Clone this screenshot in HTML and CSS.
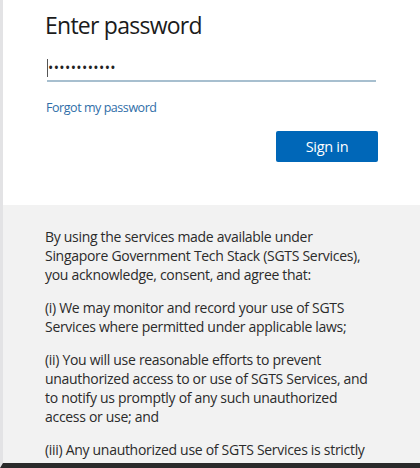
FILE: index.html
```html
<!DOCTYPE html>
<html>
<head>
<meta charset="utf-8">
<link rel="stylesheet" href="styles.css">
</head>
<body>
<div class="frame">
  <section class="login">
    <h1 class="title">Enter password</h1>
    <div class="field">
      <span class="caret"></span><span class="dots">••••••••••••</span>
    </div>
    <a class="forgot" href="#">Forgot my password</a>
    <div class="actions">
      <button class="signin">Sign in</button>
    </div>
  </section>
  <section class="terms">
    <p>By using the services made available under Singapore Government Tech Stack (SGTS Services), you acknowledge, consent, and agree that:</p>
    <p>(i) We may monitor and record your use of SGTS Services where permitted under applicable laws;</p>
    <p>(ii) You will use reasonable efforts to prevent unauthorized access to or use of SGTS Services, and to notify us promptly of any such unauthorized access or use; and</p>
    <p>(iii) Any unauthorized use of SGTS Services is strictly prohibited and may result in disciplinary action.</p>
  </section>
</div>
</body>
</html>
```
FILE: styles.css
```css
html, body {
  margin: 0;
  padding: 0;
  background: #ffffff;
}
body {
  font-family: "Open Sans", "Noto Sans", sans-serif;
  color: #1b1b1b;
}
.frame {
  height: 463px;
  overflow: hidden;
  border-left: 3px solid #e3e3e5;
  border-bottom: 5px solid #2a2a2a;
  display: flex;
  flex-direction: column;
}
.login {
  flex-shrink: 0;
  background: #ffffff;
  padding: 9px 42px 0 42px;
  height: 205px;
  box-sizing: border-box;
  display: flex;
  flex-direction: column;
}
.title {
  margin: 0;
  font-size: 23px;
  font-weight: 500;
  line-height: 32px;
  letter-spacing: -0.75px;
  color: #1b1b1b;
}
.field {
  margin: 15px 2px 0 2px;
  height: 24px;
  border-bottom: 2px solid #a7bfcf;
  display: flex;
  align-items: center;
}
.caret {
  width: 1px;
  height: 18px;
  background: #555;
}
.dots {
  font-size: 14px;
  line-height: 18px;
  color: #222;
  letter-spacing: 0.4px;
}
.forgot {
  margin-top: 17px;
  margin-left: 1px;
  font-size: 12.5px;
  line-height: 18px;
  letter-spacing: -0.45px;
  color: #2f6ea8;
  text-decoration: none;
}
.actions {
  margin-top: 14px;
  display: flex;
  justify-content: flex-end;
}
.signin {
  width: 102px;
  height: 31px;
  background: #0067b8;
  color: #ffffff;
  border: none;
  border-radius: 2px;
  font-family: "Open Sans", "Noto Sans", sans-serif;
  font-size: 14.5px;
  letter-spacing: -0.3px;
  padding: 0;
}
.terms {
  flex: 1;
  background: #f2f2f2;
  padding: 22px 42px 0 42px;
}
.terms p {
  margin: 0 0 14px 0;
  font-size: 14px;
  line-height: 19px;
  letter-spacing: -0.3px;
  color: #2b2b2b;
}
```
